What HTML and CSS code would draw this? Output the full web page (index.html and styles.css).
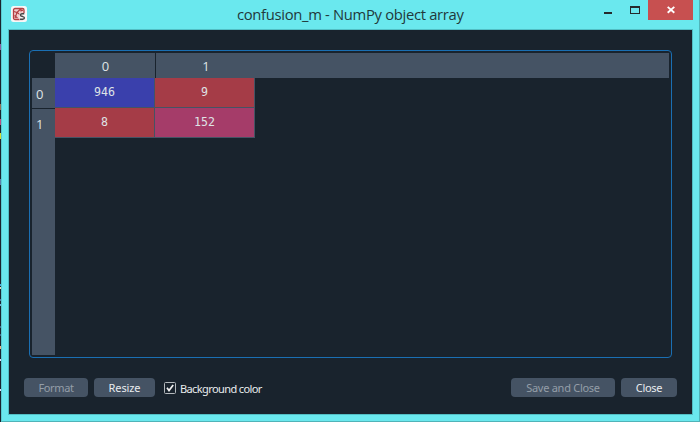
FILE: index.html
```html
<!DOCTYPE html>
<html lang="en">
<head>
<meta charset="utf-8">
<title>confusion_m - NumPy object array</title>
<link rel="stylesheet" href="styles.css">
</head>
<body>
<div class="desktop">
  <div class="window">
    <header class="titlebar">
      <svg class="app-icon" width="16" height="16" viewBox="0 0 16 16">
        <rect width="16" height="16" rx="2.5" fill="#f8f7f7"/>
        <rect x="2.500" y="2.500" width="10.500" height="11" rx="1.500" fill="#f0cfcf" stroke="#b34043" stroke-width="1.300"/>
        <path d="M3 5.500l3 1 3-3 3 1M6 6.500L4 12M6 6.500l3 2M3.500 9.500l3 2.500M10 5.500v-2" fill="none" stroke="#b34043" stroke-width="1.200"/>
        <path d="M8.500 7H14v7.500H8.500z" fill="#f8f7f7"/>
        <path d="M13.300 7.700h-2.300q-1.500 0-1.500 1.200t1.400 1.400l1 .3q1.500.3 1.500 1.400t-1.600 1.200H9" fill="none" stroke="#454545" stroke-width="1.400"/>
      </svg>
      <h1 class="title"><span>confusion_m - NumPy object array</span></h1>
      <div class="controls">
        <svg class="glyphs" width="44" height="20" viewBox="0 0 44 20">
          <path d="M0 12h8v2H0z" fill="#252a2c"/>
          <path d="M26 6h10v8H26zM27 8v5h8V8z" fill="#252a2c" fill-rule="evenodd"/>
        </svg>
        <button class="close-x" aria-label="Close">
          <svg width="8" height="8" viewBox="0 0 8 8"><path d="M.7.9l6.600 5.800M7.300.9L.7 6.700" stroke="#fff" stroke-width="1.900"/></svg>
        </button>
      </div>
    </header>
    <main class="client">
      <section class="frame">
        <div class="corner"></div>
        <div class="columns"><div class="column divided">0</div><div class="column">1</div></div>
        <div class="rows"><div class="row-label">0</div><div class="row-label">1</div></div>
        <div class="cells">
          <div class="cell blue">946</div><div class="cell red">9</div>
          <div class="cell red">8</div><div class="cell plum">152</div>
        </div>
      </section>
      <footer class="actions">
        <button class="btn format disabled"><span>Format</span></button>
        <button class="btn resize"><span>Resize</span></button>
        <label class="check">
          <svg width="12" height="12" viewBox="0 0 12 12"><rect x=".5" y=".5" width="11" height="11" rx="1" fill="none" stroke="#b4b9bd"/><path d="M3 5.800l2 2.700L9.200 3" fill="none" stroke="#f0f0f0" stroke-width="1.700"/></svg>
          <span>Background color</span>
        </label>
        <button class="btn save disabled"><span>Save and Close</span></button>
        <button class="btn close"><span>Close</span></button>
      </footer>
    </main>
  </div>
  <div class="backdrop">
    <i class="mark violet"></i><i class="mark brown"></i><i class="mark pink"></i><i class="mark yellow"></i><i class="mark steel"></i>
    <i class="mark sky"></i><i class="mark cream"></i><i class="mark steel2"></i><i class="mark sky2"></i><i class="mark dim"></i><i class="mark dim2"></i><i class="mark peach"></i><i class="mark white"></i><i class="mark white2"></i>
  </div>
</div>
</body>
</html>
```
FILE: styles.css
```css
* { box-sizing: border-box; }
body { margin: 0; overflow: hidden; }
button { border: 0; padding: 0; font: inherit; }
svg { display: block; }

.desktop {
  position: relative;
  width: 700px;
  height: 422px;
  padding-left: 1px;
  background: #19232d;
}
.window {
  display: flex;
  flex-direction: column;
  height: 422px;
  padding: 0 6px 6px 6px;
  background: #6ae8ee;
  border-right: 1px solid #50b3b8;
  border-bottom: 1px solid #50b3b8;
  border-left: 1px solid #59cbd0;
}
.titlebar {
  display: flex;
  height: 29px;
  flex: none;
}
.app-icon { margin: 6px 0 0 3px; flex: none; }
.title {
  width: 228px;
  margin: 0 0 0 210px;
  font: 400 14.8px/29px "Open Sans", sans-serif;
  color: #22393b;
  white-space: nowrap;
}
.title span { letter-spacing: -0.32px; }
.controls { display: flex; margin-left: auto; }
.close-x {
  display: grid;
  place-items: center;
  width: 45px;
  height: 20px;
  background: #c75050;
}
.client {
  flex: 1;
  padding: 20px 15px 0 15px;
  background: #19232d;
  border: 1px solid #52bec4;
}
.frame {
  display: grid;
  grid-template: 25px 277px / 23px 614px;
  width: 643px;
  height: 308px;
  margin-left: 5px;
  padding: 2px;
  border: 1px solid #1a6fb3;
  border-radius: 4px;
  color: #dfe3e6;
}
.columns, .rows { background: #455364; font: 13px/26px "Open Sans", sans-serif; }
.columns { display: flex; }
.column { width: 101px; padding-left: 1px; text-align: center; }
.column.divided { border-right: 1px solid #19232d; }
.column + .column { width: 99px; }
.row-label { height: 31px; padding: 3px 0 0 4px; border-bottom: 1px solid #19232d; }
.row-label + .row-label { height: 30px; padding-top: 2px; border: 0; }
.cells {
  display: grid;
  grid-template: 30px 30px / 100px 100px;
  font: 11.6px/28px "DejaVu Sans Mono", monospace;
}
.cell {
  border-right: 1px solid #455364;
  border-bottom: 1px solid #455364;
  text-align: center;
}
.blue { background: #3a40ac; }
.red { background: #a53c47; }
.plum { background: #a53c69; }

.actions {
  display: flex;
  align-items: center;
  margin-top: 20px;
  height: 19px;
  font: 11px/19px "Noto Sans", sans-serif;
  color: #e9ecee;
  white-space: nowrap;
}
.btn {
  height: 19px;
  border-radius: 4px;
  background: #455364;
  color: #e9ecee;
}
.disabled { color: #949ea8; }
.format { width: 64px; margin-right: 6px; letter-spacing: -0.35px; }
.resize { width: 61px; margin-right: 9px; letter-spacing: -0.1px; }
.check { display: flex; align-items: center; gap: 4px; }
.check span { margin-top: 2px; letter-spacing: -0.6px; }
.save { width: 104px; margin: 0 6px 0 auto; letter-spacing: -0.27px; }
.close { width: 56px; letter-spacing: -0.3px; }

.backdrop { position: absolute; inset: 0 auto 0 0; width: 1px; }
.mark { position: absolute; left: 0; width: 1px; height: 2px; }
.violet { top: 44px; height: 6px; background: #8a63a6; }
.brown { top: 104px; height: 6px; background: #94735a; }
.pink { top: 119px; height: 6px; background: #b95184; }
.yellow { top: 133px; height: 6px; background: #d7de35; }
.steel { top: 179px; height: 6px; background: #5a83ae; }
.sky { top: 284px; background: #43a9df; }
.cream { top: 287px; background: #e6deb9; }
.steel2 { top: 299px; background: #4e7ba3; }
.sky2 { top: 304px; background: #72b8dd; }
.dim { top: 326px; background: #416888; }
.dim2 { top: 334px; background: #416888; }
.peach { top: 346px; height: 3px; background: #edb384; }
.white { top: 359px; background: #dfddff; }
.white2 { top: 389px; background: #dfddff; }
```
